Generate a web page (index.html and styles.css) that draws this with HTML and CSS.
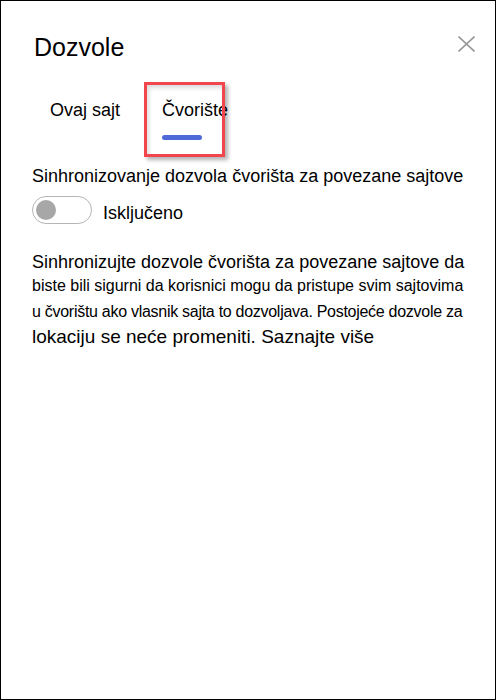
FILE: index.html
```html
<!DOCTYPE html>
<html lang="sr">
<head>
<meta charset="utf-8">
<title>Dozvole</title>
<link rel="stylesheet" href="styles.css">
</head>
<body>
<div class="panel">
  <div class="header">
    <h1 class="title">Dozvole</h1>
    <button class="close" aria-label="Zatvori">
      <svg width="17" height="16" viewBox="0 0 17 16"><path d="M0.5 0.5 L16.5 15.5 M16.5 0.5 L0.5 15.5" stroke="#9a9a9a" stroke-width="1.6" fill="none"/></svg>
    </button>
  </div>
  <div class="tabs">
    <div class="tab"><span class="tab-label">Ovaj sajt</span><span class="tab-bar"></span></div>
    <div class="tab active"><span class="tab-label">Čvorište</span><span class="tab-bar"></span></div>
  </div>
  <div class="section-title">Sinhronizovanje dozvola čvorišta za povezane sajtove</div>
  <div class="toggle-row">
    <span class="toggle"><span class="knob"></span></span>
    <span class="toggle-label">Isključeno</span>
  </div>
  <p class="desc">
    <span class="l1">Sinhronizujte dozvole čvorišta za povezane sajtove da</span>
    <span class="l2">biste bili sigurni da korisnici mogu da pristupe svim sajtovima</span>
    <span class="l3">u čvorištu ako vlasnik sajta to dozvoljava. Postojeće dozvole za</span>
    <span class="l4">lokaciju se neće promeniti. <span class="link">Saznajte više</span></span>
  </p>
  <div class="highlight"></div>
</div>
</body>
</html>
```

FILE: styles.css
```css
* { box-sizing: border-box; }
html, body { margin: 0; padding: 0; background: #fff; }
body {
  font-family: "Liberation Sans", Arial, sans-serif;
  color: #000;
}
.panel {
  position: relative;
  width: 496px;
  height: 700px;
  border: 1px solid #000;
  padding: 0 20px 0 31px;
  background: #fff;
}
.header {
  display: flex;
  justify-content: space-between;
  align-items: flex-start;
  padding-top: 30.3px;
}
.title {
  margin: 0;
  padding-left: 2px;
  font-size: 25px;
  font-weight: normal;
  line-height: 32px;
}
.close {
  margin-top: 4.7px;
  padding: 0;
  border: 0;
  background: none;
  width: 17px;
  height: 16px;
  display: block;
}
.close svg { display: block; }
.tabs {
  display: flex;
  gap: 42px;
  margin-top: 34.5px;
  padding-left: 18px;
}
.tab {
  display: flex;
  flex-direction: column;
  font-size: 18px;
  line-height: 24px;
}
.tab-bar {
  display: block;
  width: 40px;
  height: 5px;
  margin-top: 13px;
  border-radius: 3px;
  background: transparent;
}
.tab.active .tab-bar { background: #4f69d9; }
.section-title {
  margin-top: 24.3px;
  font-size: 18px;
  line-height: 24px;
}
.toggle-row {
  display: flex;
  align-items: flex-start;
  margin-top: 8.4px;
}
.toggle {
  position: relative;
  width: 60px;
  height: 28px;
  border: 1px solid #b5b5b5;
  border-radius: 14px;
  flex: none;
}
.knob {
  position: absolute;
  left: 3px;
  top: 3px;
  width: 20px;
  height: 20px;
  border-radius: 50%;
  background: #a7a7a7;
}
.toggle-label {
  margin-left: 11px;
  margin-top: 5px;
  font-size: 18px;
  line-height: 24px;
}
.desc {
  margin: 24.2px 0 0;
}
.desc > span { display: block; white-space: nowrap; }
.l1 { font-size: 18px; line-height: 24px; }
.l2 { font-size: 16px; line-height: 24px; }
.l3 { font-size: 16px; line-height: 28px; letter-spacing: -0.28px; }
.l4 { font-size: 19px; line-height: 22px; }
.link { color: #000; }
.highlight {
  position: absolute;
  left: 143px;
  top: 81px;
  width: 81px;
  height: 75px;
  border: 3px solid #f0464c;
  box-shadow: 3px 3px 4px rgba(0,0,0,0.3), inset 2px 3px 4px rgba(0,0,0,0.14);
  pointer-events: none;
}
```
